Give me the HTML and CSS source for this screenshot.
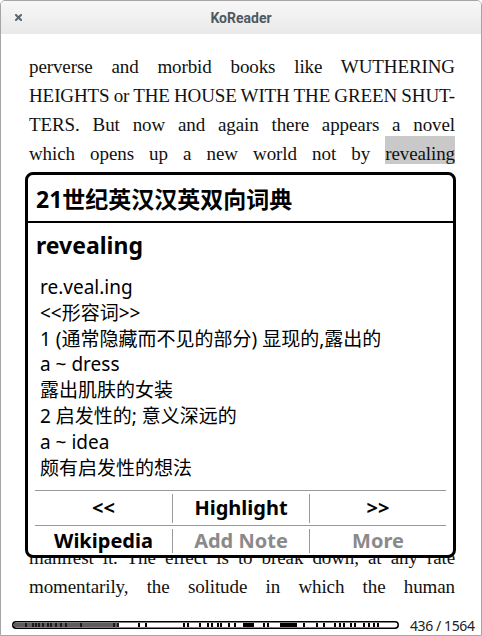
FILE: index.html
```html
<!DOCTYPE html>
<html>
<head>
<meta charset="utf-8">
<link rel="stylesheet" href="styles.css">
</head>
<body>
<div class="window">
  <div class="titlebar">
    <svg class="close" width="7" height="7" viewBox="0 0 7 7"><path d="M1 1L6 6M6 1L1 6" stroke="#5a666e" stroke-width="2" stroke-linecap="square"/></svg>
    <div class="title">KoReader</div>
    <div></div>
  </div>
  <div class="content">
    <div class="page">
      <div class="ln">perverse and morbid books like WUTHERING</div>
      <div class="ln">HEIGHTS or THE HOUSE WITH THE GREEN SHUT-</div>
      <div class="ln">TERS. But now and again there appears a novel</div>
      <div class="ln">which opens up a new world not by <span class="hl">revealing</span></div>
      <div class="lower">
        <div class="ln">manifest it. The effect is to break down, at any rate</div>
        <div class="ln">momentarily, the solitude in which the human</div>
      </div>
    </div>
    <div class="footer">
      <svg class="progress" width="387" height="8" viewBox="0 0 387 8">
        <rect x="0.75" y="0.75" width="385.5" height="6.5" rx="3.2" fill="#fff" stroke="#000" stroke-width="1.5"/>
        <rect x="2" y="2" width="105" height="4" fill="#5e5e5e"/>
        <g fill="#1a1a1a">
          <rect x="13" y="2" width="2" height="4"/><rect x="20" y="2" width="2" height="4"/><rect x="23" y="2" width="2" height="4"/><rect x="26" y="2" width="2" height="4"/><rect x="30" y="2" width="2" height="4"/><rect x="35" y="2" width="2" height="4"/><rect x="38" y="2" width="2" height="4"/><rect x="43" y="2" width="2" height="4"/><rect x="48" y="2" width="2" height="4"/><rect x="53" y="2" width="2" height="4"/><rect x="68" y="2" width="2" height="4"/><rect x="101" y="2" width="2" height="4"/><rect x="105" y="2" width="2" height="4"/>
        </g>
        <g fill="#000">
          <rect x="126" y="2" width="2" height="4"/><rect x="133" y="2" width="2" height="4"/><rect x="171" y="2" width="2" height="4"/><rect x="175" y="2" width="2" height="4"/><rect x="187" y="2" width="2" height="4"/><rect x="195" y="2" width="2" height="4"/><rect x="199" y="2" width="2" height="4"/><rect x="205" y="2" width="2" height="4"/><rect x="208" y="2" width="2" height="4"/><rect x="216" y="2" width="2" height="4"/><rect x="222" y="2" width="2" height="4"/><rect x="231" y="2" width="11" height="4"/><rect x="251" y="2" width="2" height="4"/><rect x="255" y="2" width="2" height="4"/><rect x="268" y="2" width="17" height="4"/><rect x="291" y="2" width="2" height="4"/><rect x="304" y="2" width="2" height="4"/><rect x="311" y="2" width="2" height="4"/><rect x="322" y="2" width="2" height="4"/><rect x="327" y="2" width="2" height="4"/><rect x="331" y="2" width="2" height="4"/><rect x="338" y="2" width="2" height="4"/><rect x="342" y="2" width="2" height="4"/><rect x="351" y="2" width="2" height="4"/><rect x="356" y="2" width="2" height="4"/><rect x="361" y="2" width="2" height="4"/><rect x="365" y="2" width="2" height="4"/>
        </g>
      </svg>
      <span class="pages">436 / 1564</span>
    </div>
  </div>
  <div class="popup">
    <div class="p-title">21世纪英汉汉英双向词典</div>
    <div class="p-word">revealing</div>
    <div class="p-def">
      <div>re.veal.ing</div>
      <div>&lt;&lt;形容词&gt;&gt;</div>
      <div>1 (通常隐藏而不见的部分) 显现的,露出的</div>
      <div>a ~ dress</div>
      <div>露出肌肤的女装</div>
      <div>2 启发性的; 意义深远的</div>
      <div>a ~ idea</div>
      <div>颇有启发性的想法</div>
    </div>
    <div class="p-buttons">
      <div class="row row1">
        <div class="btn">&lt;&lt;</div>
        <div class="btn sep">Highlight</div>
        <div class="btn sep">&gt;&gt;</div>
      </div>
      <div class="row row2">
        <div class="btn">Wikipedia</div>
        <div class="btn sep dim">Add Note</div>
        <div class="btn sep dim">More</div>
      </div>
    </div>
  </div>
</div>
</body>
</html>
```

FILE: styles.css
```css
html, body {
  margin: 0;
  padding: 0;
  background: #fff;
}

.window {
  position: relative;
  width: 482px;
  height: 636px;
  box-sizing: border-box;
  border: 1px solid #a5a5a5;
  border-radius: 5px 5px 0 0;
  display: flex;
  flex-direction: column;
  overflow: hidden;
  background: #fff;
}

.titlebar {
  height: 33px;
  flex: none;
  display: grid;
  grid-template-columns: 1fr auto 1fr;
  align-items: center;
  background: linear-gradient(#f7f7f7, #e9e9e9);
}

.close {
  margin-left: 14px;
  display: block;
}

.title {
  font-family: Roboto, "Noto Sans", sans-serif;
  font-weight: bold;
  font-size: 14px;
  color: #4e5961;
}

.content {
  flex: 1;
  display: flex;
  flex-direction: column;
}

.page {
  padding: 19px 26px 0 28px;
  font-family: "Liberation Serif", serif;
  font-size: 19px;
  line-height: 28.9px;
  word-spacing: -2px;
  letter-spacing: -0.1px;
  color: #111;
}

.ln {
  text-align: justify;
  text-align-last: justify;
}

.hl {
  background: #c9c9c9;
  padding: 6.8px 0 0.6px;
}

.lower {
  margin-top: 375.7px;
}

.footer {
  margin-top: auto;
  height: 18px;
  padding: 0 9px 1px 11px;
  display: flex;
  align-items: center;
  gap: 11px;
}

.progress {
  display: block;
  flex: none;
}

.pages {
  font-family: "Noto Sans", sans-serif;
  font-size: 14px;
  letter-spacing: -0.4px;
  color: #222;
  white-space: nowrap;
}

.popup {
  position: absolute;
  left: 24px;
  top: 171px;
  width: 431px;
  height: 386px;
  box-sizing: border-box;
  border: 3px solid #000;
  border-radius: 8px;
  background: #fff;
  display: flex;
  flex-direction: column;
  font-family: "Noto Sans", "Noto Sans CJK SC", sans-serif;
  color: #000;
}

.p-title {
  height: 46px;
  flex: none;
  display: flex;
  align-items: center;
  padding-left: 8px;
  font-weight: bold;
  font-size: 23px;
  border-bottom: 2px solid #000;
}

.p-word {
  padding: 6.5px 8px 0;
  font-weight: bold;
  font-size: 23px;
  line-height: 31px;
}

.p-def {
  flex: 1;
  padding: 14.5px 12px 0;
  font-size: 19px;
  line-height: 25.8px;
}

.p-buttons {
  margin: 0 7px;
  border-top: 1px solid #999;
  flex: none;
}

.row {
  display: grid;
  grid-template-columns: repeat(3, 1fr);
  font-weight: bold;
  font-size: 20px;
  line-height: 22px;
}

.row1 {
  height: 34px;
}

.row2 {
  height: 29px;
  border-top: 1px solid #999;
}

.btn {
  display: flex;
  align-items: center;
  justify-content: center;
  margin: 3px 0 2px;
}

.row1 .btn {
  padding-bottom: 2px;
}

.sep {
  border-left: 1px solid #999;
}

.dim {
  color: #8a8a8a;
}
```
